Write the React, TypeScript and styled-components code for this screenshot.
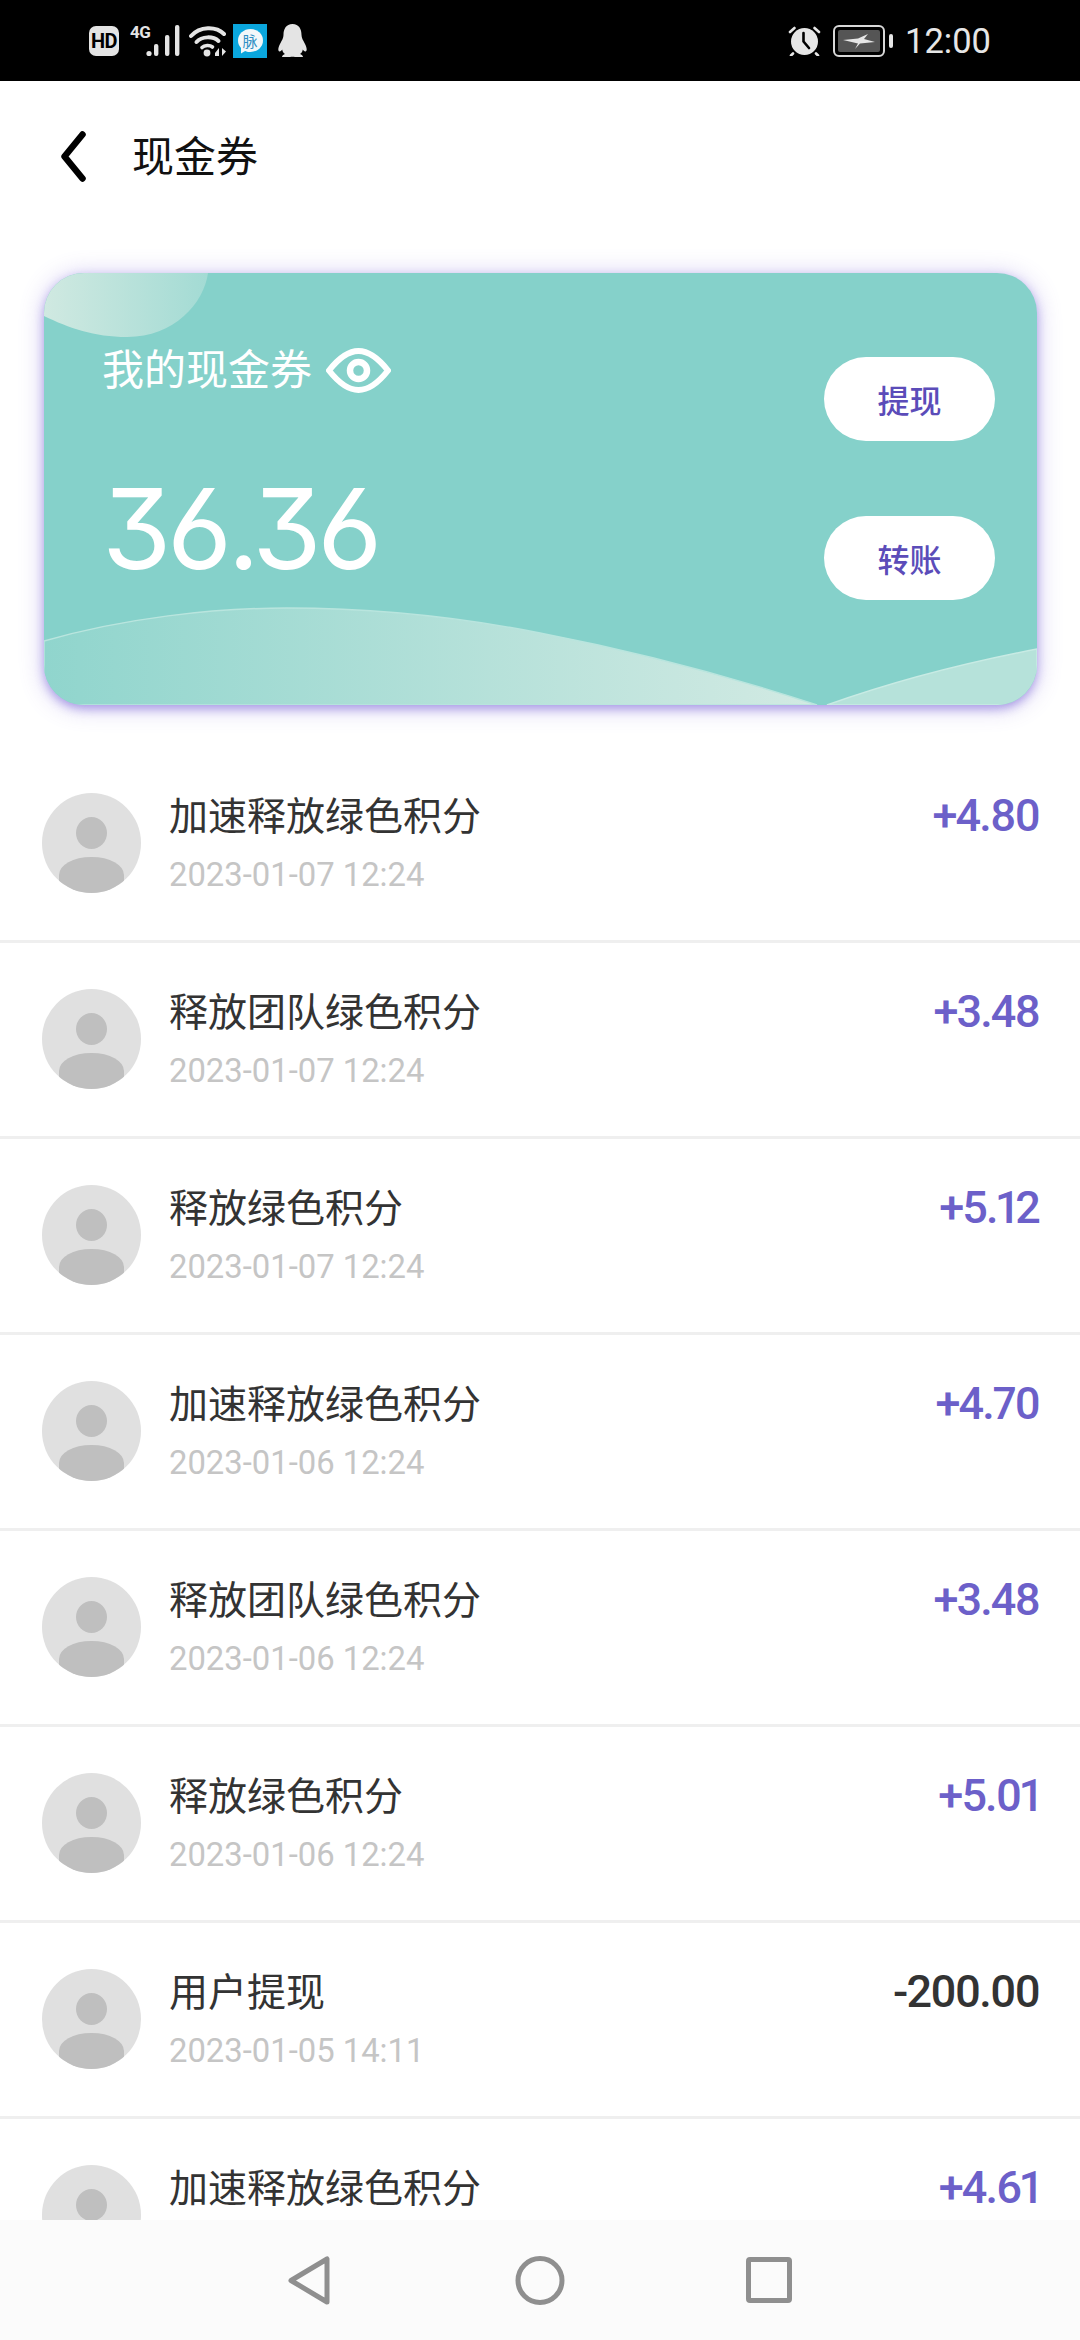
import React from "react";
import styled, { createGlobalStyle } from "styled-components";

const Global = createGlobalStyle`
  html, body { margin: 0; padding: 0; background: #fff; }
  body { font-family: "Noto Sans CJK SC", "Roboto", sans-serif; }
  * { box-sizing: border-box; }
`;

const Page = styled.div`
  width: 1080px;
  height: 2340px;
  display: flex;
  flex-direction: column;
  overflow: hidden;
  background: #fff;
`;

const StatusBar = styled.div`
  flex: none;
  height: 81px;
  background: #000;
  display: flex;
  align-items: center;
  justify-content: space-between;
  padding: 0 89px 0 89px;
  color: #e6e6e6;
`;

const StatusGroup = styled.div`
  display: flex;
  align-items: center;
`;

const HdBadge = styled.div`
  width: 30px;
  height: 30px;
  border-radius: 7px;
  background: #e4e4e4;
  color: #000;
  font: 700 20px "Roboto", sans-serif;
  letter-spacing: -0.5px;
  display: flex;
  align-items: center;
  justify-content: center;
  margin-right: 11px;
`;

const NetworkWrap = styled.div`
  position: relative;
  width: 50px;
  height: 32px;
  margin-right: 9px;
`;

const FourG = styled.span`
  position: absolute;
  left: 0;
  top: -1px;
  font: 700 17px/17px "Roboto", sans-serif;
  letter-spacing: -0.6px;
  color: #e4e4e4;
`;

const StatusSvg = styled.svg<{ $mr?: number }>`
  display: block;
  flex: none;
  margin-right: ${(p) => p.$mr ?? 0}px;
`;

const MaiMaiIcon = styled.div`
  position: relative;
  width: 34px;
  height: 34px;
  background: #0aa6dd;
  margin-right: 11px;
  display: flex;
  align-items: center;
  justify-content: center;
`;

const MaiBubble = styled.div`
  width: 25px;
  height: 23px;
  border-radius: 50%;
  background: #f2f7fa;
  color: #2f8fc4;
  font: 400 15px/23px "Noto Sans CJK SC", sans-serif;
  text-align: center;
  margin-top: -1px;
`;

const MaiTail = styled.div`
  position: absolute;
  left: 8px;
  bottom: 4px;
  width: 7px;
  height: 6px;
  background: #f2f7fa;
  clip-path: polygon(0 0, 100% 30%, 0 100%);
`;

const Clock = styled.div`
  font: 400 34.5px/36px "Roboto", sans-serif;
  color: #e6e6e6;
  margin-left: 12px;
`;

const Header = styled.div`
  flex: none;
  height: 150px;
  display: flex;
  align-items: center;
  padding-left: 61px;
`;

const Title = styled.div`
  font-size: 42px;
  line-height: 50px;
  color: #111;
  margin: 0 0 5px 46px;
`;

const Card = styled.div`
  position: relative;
  flex: none;
  margin: 42px 43px 42px 44px;
  height: 432px;
  border-radius: 40px;
  background: #85d1ca;
  box-shadow: 0 4px 10px rgba(105, 80, 210, 0.45), 0 2px 24px rgba(105, 80, 210, 0.32);
  display: flex;
  justify-content: space-between;
  padding: 84px 42px 0 58px;
`;

const CardArt = styled.svg`
  position: absolute;
  inset: 0;
  width: 100%;
  height: 100%;
  border-radius: 40px;
`;

const CardLeft = styled.div`
  position: relative;
  display: flex;
  flex-direction: column;
`;

const LabelRow = styled.div`
  display: flex;
  align-items: center;
  gap: 14px;
  height: 26px;
  color: #fff;
  font-size: 42px;
  line-height: 26px;
`;

const LabelText = styled.span`
  position: relative;
  top: -3px;
`;

const Balance = styled.div`
  margin-top: 89px;
  margin-left: 0;
  color: #fff;
  font: 400 112px/112px "Inter", sans-serif;
  font-feature-settings: "cv09", "cv03";
  letter-spacing: -4.5px;
`;

const CardActions = styled.div`
  position: relative;
  display: flex;
  flex-direction: column;
  gap: 75px;
`;

const ActionButton = styled.div`
  width: 171px;
  height: 84px;
  border-radius: 42px;
  background: #fff;
  color: #5b4cb9;
  font-size: 32px;
  font-weight: 500;
  display: flex;
  align-items: center;
  justify-content: center;
`;

const List = styled.div`
  flex: 1;
  min-height: 0;
  overflow: hidden;
`;

const Row = styled.div`
  height: 196px;
  border-bottom: 3px solid #efefef;
  padding: 46px 42px 0 42px;
  display: flex;
  align-items: flex-start;
`;

const Avatar = styled.div`
  position: relative;
  flex: none;
  width: 99px;
  height: 100px;
  border-radius: 50%;
  background: #e0e0e0;
  overflow: hidden;
`;

const AvatarHead = styled.div`
  position: absolute;
  left: 34px;
  top: 24px;
  width: 31px;
  height: 32px;
  border-radius: 50%;
  background: #bfbfbf;
`;

const AvatarBody = styled.div`
  position: absolute;
  left: 17px;
  top: 64px;
  width: 65px;
  height: 60px;
  border-radius: 32px / 18px;
  background: #bfbfbf;
`;

const RowText = styled.div`
  flex: 1;
  margin-left: 28px;
  display: flex;
  flex-direction: column;
`;

const RowTitle = styled.div`
  margin-top: -8px;
  font-size: 39px;
  line-height: 56px;
  color: #333;
`;

const RowTime = styled.div`
  margin-top: 14px;
  font: 400 32.8px/40px "Roboto", sans-serif;
  color: #c5c5c5;
`;

const Amount = styled.div<{ $negative: boolean }>`
  margin-top: -3px;
  font: 500 45px/52px "Roboto", sans-serif;
  font-variant-numeric: proportional-nums;
  letter-spacing: -1.9px;
  margin-right: -1px;
  color: ${(p) => (p.$negative ? "#333333" : "#6c60c9")};
`;

const NavBar = styled.div`
  flex: none;
  height: 120px;
  background: #fbfbfb;
  display: flex;
  align-items: center;
  padding: 0 0 0 288px;
`;

const rows: [string, string | null, string][] = [
  ["加速释放绿色积分", "2023-01-07 12:24", "+4.80"],
  ["释放团队绿色积分", "2023-01-07 12:24", "+3.48"],
  ["释放绿色积分", "2023-01-07 12:24", "+5.12"],
  ["加速释放绿色积分", "2023-01-06 12:24", "+4.70"],
  ["释放团队绿色积分", "2023-01-06 12:24", "+3.48"],
  ["释放绿色积分", "2023-01-06 12:24", "+5.01"],
  ["用户提现", "2023-01-05 14:11", "-200.00"],
  ["加速释放绿色积分", null, "+4.61"],
];

export default function App() {
  return (
    <Page>
      <Global />
      <StatusBar>
        <StatusGroup>
          <HdBadge>HD</HdBadge>
          <NetworkWrap>
            <FourG>4G</FourG>
            <StatusSvg width="50" height="32" viewBox="0 0 50 32" fill="#e4e4e4">
              <circle cx="19" cy="28.5" r="2.6" />
              <rect x="24" y="19" width="4.4" height="12" rx="2" />
              <rect x="35" y="10" width="4.4" height="21" rx="2" />
              <rect x="45" y="0" width="4.4" height="31" rx="2" />
            </StatusSvg>
          </NetworkWrap>
          <StatusSvg $mr={6} width="38" height="32" viewBox="0 0 38 32" fill="none" stroke="#e4e4e4" strokeLinecap="round">
            <path d="M2 11 C11 1 27 1 35 9" strokeWidth="4" />
            <path d="M7.5 17 C13 11 24 11 29.5 16" strokeWidth="4" />
            <path d="M13 22.5 C15.5 20 21 20 23.5 22" strokeWidth="3.6" />
            <circle cx="18" cy="28" r="3.4" fill="#e4e4e4" stroke="none" />
            <path d="M26 28 L30 23 V31 H26 Z" fill="#e4e4e4" stroke="none" />
            <path d="M33 23 V31 L37 26.5 Z" fill="#e4e4e4" stroke="none" />
          </StatusSvg>
          <MaiMaiIcon>
            <MaiBubble>脉</MaiBubble>
            <MaiTail />
          </MaiMaiIcon>
          <StatusSvg width="29" height="33" viewBox="0 0 29 33" fill="#e4e4e4">
            <path d="M14.5 0 C21 0 23.5 5 23.5 11 C23.5 14 25 16 27 20 C29 24 29.3 27 27.5 27.5 C26.5 27.7 25.5 26.5 24.8 25.5 C24.5 27.5 23.5 29 22 30 C23.5 30.5 25 31.5 25 33 H17 C15.5 32.5 13.5 32.5 12 33 H4 C4 31.5 5.5 30.5 7 30 C5.5 29 4.5 27.5 4.2 25.5 C3.5 26.5 2.5 27.7 1.5 27.5 C-0.3 27 0 24 2 20 C4 16 5.5 14 5.5 11 C5.5 5 8 0 14.5 0 Z" />
          </StatusSvg>
        </StatusGroup>
        <StatusGroup>
          <StatusSvg $mr={12} width="33" height="30" viewBox="0 0 33 30">
            <circle cx="16.5" cy="15.5" r="13.5" fill="#e6e6e6" />
            <path d="M15.5 7 V15.5 L21 22" fill="none" stroke="#000" strokeWidth="2.6" strokeLinecap="round" strokeLinejoin="round" />
            <path d="M2 6 L6.5 2 M31 6 L26.5 2 M5 27.5 L3 29.5 M28 27.5 L30 29.5" stroke="#e6e6e6" strokeWidth="2.6" strokeLinecap="round" />
          </StatusSvg>
          <StatusSvg width="60" height="32" viewBox="0 0 60 32">
            <rect x="1" y="1" width="50" height="30" rx="5" fill="none" stroke="#d8d8d8" strokeWidth="2" />
            <rect x="5" y="5" width="42" height="22" rx="2" fill="#555" />
            <path d="M10 15 L25 13.5 L35 9 L31 14 L42 17 L27 18.5 L22 24 L25 18.5 Z" fill="#e6e6e6" />
            <rect x="56" y="9" width="4" height="14" rx="2" fill="#e6e6e6" />
          </StatusSvg>
          <Clock>12:00</Clock>
        </StatusGroup>
      </StatusBar>

      <Header>
        <svg width="25" height="51" viewBox="0 0 25 51" fill="none">
          <path d="M21.5 3.5 L3.5 25.5 L21.5 47.5" stroke="#000" strokeWidth="6.5" strokeLinecap="round" strokeLinejoin="round" />
        </svg>
        <Title>现金券</Title>
      </Header>

      <Card>
        <CardArt viewBox="0 0 993 432">
          <defs>
            <linearGradient id="blob" x1="0" x2="1" y1="0" y2="0">
              <stop offset="0" stopColor="#d0e9e1" />
              <stop offset="1" stopColor="#a3dbd4" />
            </linearGradient>
            <linearGradient id="wave" x1="0" x2="1" y1="0" y2="0">
              <stop offset="0" stopColor="#90d5cd" />
              <stop offset="1" stopColor="#d2eae3" />
            </linearGradient>
          </defs>
          <path d="M0 0 H164 C160 30 130 64 83 64 C50 64 25 55 0 43 Z" fill="url(#blob)" />
          <path d="M0 368 C80 345 170 335 243 335 C330 335 420 345 496 360 C600 380 700 408 773 432 H0 Z" fill="url(#wave)" stroke="#b9e5de" strokeWidth="1.5" />
          <path d="M783 432 C850 408 920 390 993 376 V432 Z" fill="#b6e2da" stroke="#c8ebe4" strokeWidth="1.5" />
        </CardArt>
        <CardLeft>
          <LabelRow>
            <LabelText>我的现金券</LabelText>
            <svg width="65" height="45" viewBox="0 0 65 45" fill="none" stroke="#fff">
              <path d="M3 22.5 C14 8.5 24 3 32.5 3 C41 3 51 8.5 62 22.5 C51 36.5 41 42 32.5 42 C24 42 14 36.5 3 22.5 Z" strokeWidth="6" strokeLinejoin="round" />
              <circle cx="32.5" cy="22.5" r="8.5" strokeWidth="6.5" />
            </svg>
          </LabelRow>
          <Balance>36.36</Balance>
        </CardLeft>
        <CardActions>
          <ActionButton>提现</ActionButton>
          <ActionButton>转账</ActionButton>
        </CardActions>
      </Card>

      <List>
        {rows.map(([title, time, amount], i) => (
          <Row key={i}>
            <Avatar>
              <AvatarHead />
              <AvatarBody />
            </Avatar>
            <RowText>
              <RowTitle>{title}</RowTitle>
              {time && <RowTime>{time}</RowTime>}
            </RowText>
            <Amount $negative={amount.startsWith("-")}>{amount}</Amount>
          </Row>
        ))}
      </List>

      <NavBar>
        <StatusSvg $mr={185} width="42" height="49" viewBox="0 0 42 49" fill="none" stroke="#8f8f8f" strokeWidth="5" strokeLinejoin="round">
          <path d="M39 3 V46 L3 24.5 Z" />
        </StatusSvg>
        <StatusSvg $mr={181} width="50" height="49" viewBox="0 0 50 49" fill="none" stroke="#8f8f8f" strokeWidth="5">
          <circle cx="25" cy="24.5" r="22" />
        </StatusSvg>
        <StatusSvg width="46" height="46" viewBox="0 0 46 46" fill="none" stroke="#8f8f8f" strokeWidth="5" strokeLinejoin="round">
          <rect x="2.5" y="2.5" width="41" height="41" rx="1.5" />
        </StatusSvg>
      </NavBar>
    </Page>
  );
}
